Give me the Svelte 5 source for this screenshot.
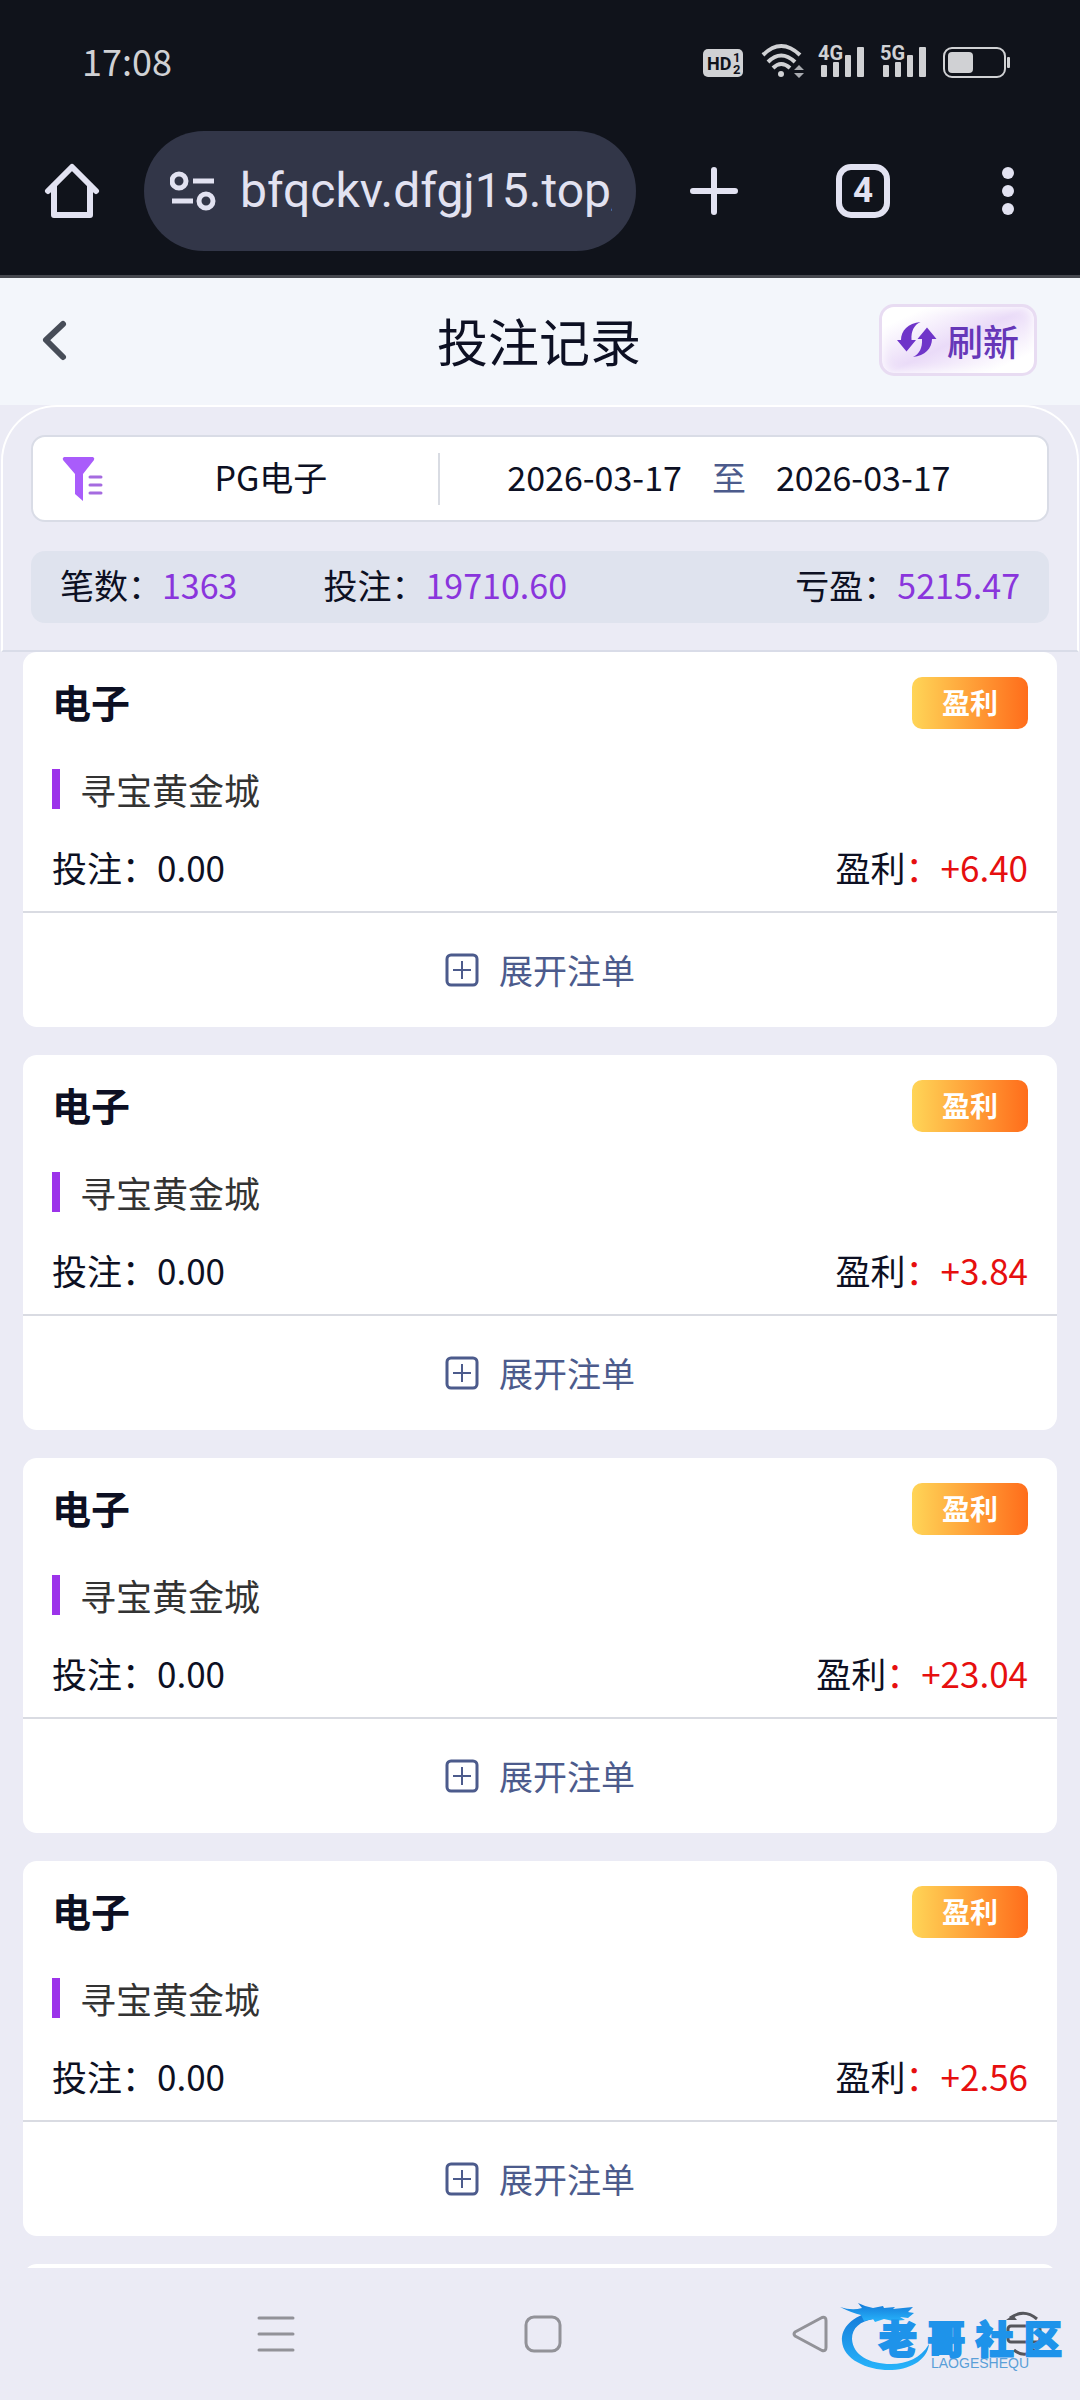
<script lang="ts">
	type Bet = { id: number; kind: string; game: string; stake: string; profit: string };

	const stats = [
		{ label: '笔数', value: '1363' },
		{ label: '投注', value: '19710.60' },
		{ label: '亏盈', value: '5215.47' }
	];

	const bets: Bet[] = [
		{ id: 1, kind: '电子', game: '寻宝黄金城', stake: '0.00', profit: '+6.40' },
		{ id: 2, kind: '电子', game: '寻宝黄金城', stake: '0.00', profit: '+3.84' },
		{ id: 3, kind: '电子', game: '寻宝黄金城', stake: '0.00', profit: '+23.04' },
		{ id: 4, kind: '电子', game: '寻宝黄金城', stake: '0.00', profit: '+2.56' }
	];

	let url = $state('bfqckv.dfgj15.top/');
</script>

{#snippet signal(name: string)}
	<svg class="signal" width="48" height="36" viewBox="0 0 48 36" fill="#d0d1d4">
		<text x="-1" y="18" font-size="20">{name}</text>
		<rect x="2" y="23" width="6" height="12" rx="1" />
		<rect x="14" y="20" width="6" height="15" rx="1" />
		<rect x="26" y="13" width="6" height="22" rx="1" />
		<rect x="38" y="5" width="7" height="30" rx="1" />
	</svg>
{/snippet}

<div class="screen">
	<div class="chrome">
		<div class="status">
			<span class="clock">17:08</span>
			<div class="status-icons">
				<svg class="hd" width="40" height="36" viewBox="0 0 40 36" fill="#10131b">
					<rect y="7" width="40" height="28" rx="5" fill="#d0d1d4" />
					<text x="4" y="28" font-size="18">HD</text>
					<text x="30" y="20" font-size="13">1</text>
					<text x="30" y="32" font-size="13">2</text>
				</svg>
				<svg width="44" height="36" viewBox="0 0 44 36">
					<g fill="none" stroke="#d0d1d4" stroke-width="4">
						<path d="M2 13Q20-5 39 13" />
						<path d="M7 20Q20 7 34 20" />
						<path d="M12 26Q20 18 29 26" />
					</g>
					<circle cx="20" cy="32" r="3" fill="#d0d1d4" />
					<path d="M33 28l5-5 5 5zM33 31h10l-5 5z" fill="#a9abb0" />
				</svg>
				{@render signal('4G')}
				{@render signal('5G')}
				<svg width="68" height="36" viewBox="0 0 68 36">
					<rect x="1" y="6" width="61" height="29" rx="8" fill="none" stroke="#d0d1d4" stroke-width="2" />
					<rect x="5" y="10" width="25" height="21" rx="4" fill="#d0d1d4" />
					<rect x="64" y="15" width="3" height="11" rx="1" fill="#d0d1d4" />
				</svg>
			</div>
		</div>

		<div class="toolbar">
			<button class="home" aria-label="主页">
				<svg width="56" height="56" viewBox="0 0 56 56" fill="none" stroke="#e2e2f1" stroke-width="6" stroke-linecap="round" stroke-linejoin="round">
					<path d="M4 28L28 4l24 24" />
					<path d="M10 23v29h36V23" />
				</svg>
			</button>
			<div class="address">
				<svg width="46" height="40" viewBox="0 0 46 40" fill="none" stroke="#e2e2f1" stroke-width="5">
					<circle cx="9" cy="10" r="7" />
					<path d="M23 10h21M2 30h21" />
					<circle cx="36" cy="30" r="7" />
				</svg>
				<input class="url" type="text" aria-label="网址" bind:value={url} />
			</div>
			<div class="actions">
				<button aria-label="新标签页">
					<svg width="60" height="56" viewBox="0 0 60 56" stroke="#e2e2f1" stroke-width="6" stroke-linecap="round">
						<path d="M30 7v42M9 28h42" />
					</svg>
				</button>
				<button class="tabs">4</button>
				<button aria-label="更多">
					<svg width="52" height="56" viewBox="0 0 52 56" fill="#e2e2f1">
						<circle cx="26" cy="10" r="6" />
						<circle cx="26" cy="28" r="6" />
						<circle cx="26" cy="46" r="6" />
					</svg>
				</button>
			</div>
		</div>
	</div>

	<header class="header">
		<button class="back" aria-label="返回">
			<svg width="28" height="44" viewBox="0 0 28 44" fill="none" stroke="#474d58" stroke-width="6" stroke-linecap="round" stroke-linejoin="round">
				<path d="M22 6L5 22l17 17" />
			</svg>
		</button>
		<h1>投注记录</h1>
		<button class="refresh">
			<svg width="40" height="37" viewBox="0 0 40 37" fill="#6f35c9">
				<path d="M23.500 1C11 2 4 10 4 19H0l9.500 11.500L19 19h-4.500C14 10 17 4 23.500 1z" />
				<path d="M16 36c12-1 19-9 19-18h4.500L30 6.500 20.500 18H25c.5 9-2.500 15-9 18z" />
			</svg>
			刷新
		</button>
	</header>

	<section class="filters">
		<div class="filter-box">
			<button class="game-filter">
				<svg width="42" height="46" viewBox="0 0 42 46">
					<path d="M2 1h29q2 1 1 3L21 18v27l-8-7V18L1 4Q0 2 2 1z" fill="#a95cfb" />
					<path d="M28 21h11M28 29h11M28 37h11" stroke="#a56be0" stroke-width="3" stroke-linecap="round" />
				</svg>
				<span>PG电子</span>
			</button>
			<div class="divider"></div>
			<div class="dates">
				<button>2026-03-17</button>
				<span class="to">至</span>
				<button>2026-03-17</button>
			</div>
		</div>
		<div class="stats">
			{#each stats as s}
				<div class="stat">{s.label}：<span class="stat-value">{s.value}</span></div>
			{/each}
		</div>
	</section>

	<main class="list">
		{#each bets as bet (bet.id)}
			<article class="card">
				<div class="card-body">
					<div class="row">
						<h2>{bet.kind}</h2>
						<span class="badge">盈利</span>
					</div>
					<p class="game">{bet.game}</p>
					<div class="row">
						<span>投注：{bet.stake}</span>
						<span class="profit"><span class="profit-label">盈利</span>：{bet.profit}</span>
					</div>
				</div>
				<button class="expand">
					<svg width="34" height="34" viewBox="0 0 34 34" fill="none" stroke="#4c5b8c" stroke-width="3">
						<rect x="2" y="2" width="30" height="30" rx="4" />
						<path d="M8 17h18M17 8v18" stroke-width="2" />
					</svg>
					展开注单
				</button>
			</article>
		{/each}
		<!-- haut de la carte suivante -->
		<div class="card next"></div>
	</main>

	<nav class="navbar">
		<button aria-label="最近任务">
			<svg width="38" height="38" viewBox="0 0 38 38" stroke="#929298" stroke-width="3" stroke-linecap="round">
				<path d="M2 3h34M2 19h34M2 35h34" />
			</svg>
		</button>
		<button aria-label="桌面">
			<svg width="38" height="38" viewBox="0 0 38 38" fill="none" stroke="#929298" stroke-width="3">
				<rect x="2" y="2" width="34" height="34" rx="8" />
			</svg>
		</button>
		<button aria-label="后退">
			<svg width="38" height="38" viewBox="0 0 38 38" fill="none" stroke="#929298" stroke-width="3" stroke-linejoin="round">
				<path d="M31 2.500L4 17q-2 2 0 4L31 35.500q4 1 4-3v-27q0-4-4-3z" />
			</svg>
		</button>
		<button class="rotate" aria-label="旋转屏幕">
			<svg width="36" height="46" viewBox="0 0 36 46" fill="none" stroke="#55565c" stroke-width="3">
				<path d="M4 7Q18-3 31 8M8 39q11 9 21-1" />
				<path d="M0 9l7-5 4 5z" fill="#55565c" stroke="none" />
				<rect x="2" y="15" width="32" height="16" rx="3" />
			</svg>
		</button>

		<div class="logo">
			<svg class="dragon" width="94" height="76" viewBox="0 0 94 76">
				<defs>
					<linearGradient id="blue" x1="0" y1="0" x2="0" y2="1">
						<stop offset="0" stop-color="#1479d8" />
						<stop offset="1" stop-color="#27b4fb" />
					</linearGradient>
				</defs>
				<g fill="url(#blue)">
					<path d="M34 16C12 21 1 33 2 46c1 19 27 30 50 29 21-1 36-12 37-26-8 14-22 20-38 20-22 0-38-9-39-25 0-11 8-18 22-20z" />
					<path d="M0 12q12 4 22 1l-4-5q8 4 15 5l10-2 1 2 11-1-2 2 20-2-5 5 6 1-6 5-8-1 5 3-12 1-9-2-9 3-2-3-9 2-3-6Q12 18 0 12z" />
				</g>
			</svg>
			<div class="logo-name">
				{#each '老哥社区' as c}
					<span>{c}</span>
				{/each}
			</div>
			<div class="logo-sub">LAOGESHEQU</div>
		</div>
	</nav>
</div>

<style>
	:global(body) {
		margin: 0;
		background: #ebebf5;
	}

	.screen {
		display: flex;
		flex-direction: column;
		height: 100vh;
		font-family: 'Noto Sans CJK SC', sans-serif;
		font-size: 35px;
		line-height: 50px;
		color: #0d1023;
	}

	button {
		display: flex;
		align-items: center;
		justify-content: center;
		padding: 0;
		border: none;
		background: none;
		color: inherit;
		font: inherit;
		cursor: pointer;
	}

	svg {
		display: block;
		flex-shrink: 0;
	}

	h1,
	h2,
	p {
		margin: 0;
	}

	.chrome {
		background: #10131b;
		border-bottom: 3px solid #46484f;
		padding: 42px 0 24px;
	}

	.status {
		display: flex;
		align-items: center;
		justify-content: space-between;
		height: 36px;
		margin-bottom: 53px;
		padding: 0 69px 0 82px;
	}

	.clock {
		font-size: 36px;
		color: #d0d1d4;
	}

	.status-icons {
		display: flex;
		gap: 14px;
		font-family: Roboto, sans-serif;
		font-weight: 700;
	}

	.hd {
		margin-right: 4px;
	}

	.signal {
		overflow: visible;
	}

	.toolbar {
		display: flex;
		align-items: center;
		padding: 0 46px 0 44px;
	}

	.home {
		margin-right: 44px;
	}

	.address {
		flex: 1;
		min-width: 0;
		display: flex;
		align-items: center;
		gap: 24px;
		height: 120px;
		box-sizing: border-box;
		padding: 0 24px 0 26px;
		border-radius: 60px;
		background: #323648;
	}

	.url {
		flex: 1;
		min-width: 0;
		padding: 0;
		border: none;
		outline: none;
		background: none;
		color: #e2e2f1;
		font-family: Roboto, sans-serif;
		font-size: 48px;
		line-height: 64px;
	}

	.actions {
		display: flex;
		align-items: center;
		gap: 92px;
		padding-left: 48px;
	}

	.tabs {
		box-sizing: border-box;
		width: 54px;
		height: 54px;
		border: 6px solid #e2e2f1;
		border-radius: 15px;
		color: #e2e2f1;
		font-family: Roboto, sans-serif;
		font-size: 35px;
		font-weight: 700;
	}

	.header {
		display: grid;
		grid-template-columns: 1fr auto 1fr;
		align-items: center;
		box-sizing: border-box;
		height: 127px;
		padding: 0 43px 4px 41px;
		background: #f3f6fb;
	}

	h1 {
		font-size: 51px;
		font-weight: 400;
		line-height: 70px;
	}

	.back {
		justify-self: start;
	}

	.refresh {
		justify-self: end;
		box-sizing: border-box;
		height: 72px;
		gap: 10px;
		padding: 0 15px;
		border: 3px solid #e8dcf2;
		border-radius: 15px;
		background: linear-gradient(155deg, #fff 15%, #eadbf8 50%, #fff 85%);
		box-shadow: inset 0 0 12px #fff;
		color: #6637b8;
		font-size: 36px;
		font-weight: 500;
	}

	.filters {
		display: flex;
		flex-direction: column;
		gap: 29px;
		margin: 0 1px;
		padding: 28px 28px 27px;
		border: 2px solid #fff;
		border-bottom-color: #d9dce8;
		border-radius: 56px 56px 0 0;
		font-size: 34px;
	}

	.filter-box {
		display: grid;
		grid-template-columns: 40fr 2px 60fr;
		align-items: center;
		box-sizing: border-box;
		height: 87px;
		border: 2px solid #d9dce6;
		border-radius: 14px;
		background: #fff;
	}

	.game-filter {
		padding-left: 29px;
	}

	.game-filter span {
		flex: 1;
		padding-bottom: 4px;
	}

	.divider {
		height: 52px;
		background: #d9dce3;
	}

	.dates {
		display: flex;
		justify-content: center;
		gap: 30px;
		padding: 0 29px 4px 0;
	}

	.to {
		color: #4c5b8c;
	}

	.stats {
		display: flex;
		align-items: center;
		gap: 86px;
		box-sizing: border-box;
		height: 72px;
		padding: 0 29px 4px;
		border-radius: 14px;
		background: #dfe3ee;
	}

	.stat:last-child {
		margin-left: auto;
	}

	.stat-value {
		color: #8a35dc;
	}

	.list {
		flex: 1;
		min-height: 0;
		display: flex;
		flex-direction: column;
		gap: 28px;
		padding: 0 23px;
		overflow: hidden;
	}

	.card {
		flex-shrink: 0;
		border-radius: 14px;
		background: #fff;
	}

	.card-body {
		padding: 25px 29px 19px;
		border-bottom: 2px solid #d9dbe2;
	}

	.row {
		display: flex;
		align-items: center;
		justify-content: space-between;
	}

	h2 {
		font-size: 39px;
		font-weight: 700;
		line-height: 48px;
		padding-bottom: 4px;
	}

	.badge {
		padding: 0 30px 2px;
		border-radius: 10px;
		background: linear-gradient(90deg, #ffd557, #ff6d1b);
		color: #fff;
		font-size: 28px;
		font-weight: 700;
		line-height: 50px;
	}

	.game {
		margin: 40px 0 33px;
		padding-left: 20px;
		border-left: 8px solid #9c33ea;
		color: #333;
		font-size: 36px;
		line-height: 40px;
	}

	.profit {
		color: #e60f0f;
	}

	.profit-label {
		color: #0d1023;
	}

	.expand {
		width: 100%;
		height: 114px;
		gap: 20px;
		color: #4c5b8c;
		font-size: 34px;
	}

	.next {
		height: 40px;
	}

	.navbar {
		position: relative;
		display: grid;
		grid-template-columns: repeat(3, 267fr) 99fr;
		align-items: center;
		height: 132px;
		padding: 0 38px 0 142px;
	}

	.rotate {
		justify-self: end;
	}

	.logo {
		position: absolute;
		top: 27px;
		right: 18px;
		box-sizing: border-box;
		width: 224px;
		height: 76px;
		padding: 24px 0 0 41px;
		pointer-events: none;
	}

	.dragon {
		position: absolute;
		top: 0;
		left: 2px;
	}

	.logo-name {
		position: relative;
		display: flex;
		justify-content: space-between;
		color: #1e93ea;
		font-size: 38px;
		font-weight: 900;
		line-height: 36px;
		-webkit-text-stroke: 2px #1e93ea;
	}

	.logo-sub {
		padding-left: 52px;
		color: #5a9fd8;
		font-family: 'Liberation Sans', sans-serif;
		font-size: 14px;
		line-height: 16px;
	}
</style>
